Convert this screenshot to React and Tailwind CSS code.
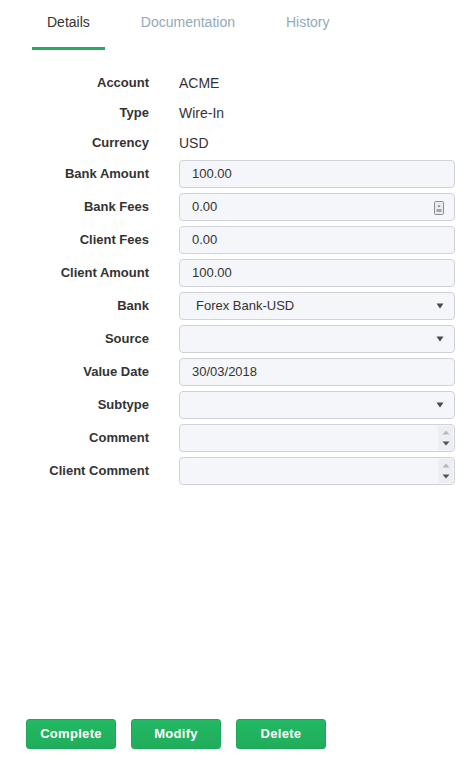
import React from 'react';

const font = { fontFamily: '"Liberation Sans", Arial, sans-serif' };

const Caret = () => (
  <svg width="8" height="6" viewBox="0 0 8 6" className="shrink-0">
    <path d="M0.5 0.5 L7.5 0.5 L4 5.5 Z" fill="#4a4a4a" />
  </svg>
);

const CalcIcon = () => (
  <svg width="10" height="14" viewBox="0 0 10 14" className="shrink-0">
    <rect x="0.5" y="0.5" width="9" height="13" rx="1" fill="#e9ebee" stroke="#8a8d90" />
    <path d="M5 3.5 L6.5 6 L3.5 6 Z" fill="#8a8d90" />
    <rect x="2.5" y="8" width="5" height="3" fill="#a4a7aa" />
  </svg>
);

const Spinner = () => (
  <div className="flex h-full w-[15px] flex-col items-center justify-center gap-[6px] bg-[#eceef1]">
    <svg width="8" height="5" viewBox="0 0 8 5">
      <path d="M0.5 4.5 L7.5 4.5 L4 0.5 Z" fill="#b5b7ba" />
    </svg>
    <svg width="8" height="5" viewBox="0 0 8 5">
      <path d="M0.5 0.5 L7.5 0.5 L4 4.5 Z" fill="#505255" />
    </svg>
  </div>
);

const TextRow = ({ label, value }) => (
  <div className="flex h-[30px] items-center">
    <div className="w-[150px] pr-px text-right text-[13px] font-bold text-[#333]">{label}</div>
    <div className="ml-[29px] text-[14px] text-[#333]">{value}</div>
  </div>
);

const InputRow = ({ label, value, kind }) => (
  <div className="flex h-[28px] items-center">
    <div className="w-[150px] pr-px text-right text-[13px] font-bold text-[#333]">{label}</div>
    <div className="ml-[29px] flex h-[28px] w-[276px] items-center rounded-[4px] border border-[#cfd3d8] bg-[#f4f6fa] text-[13px] text-[#333]">
      <span className={kind === 'select' ? 'flex-1 pl-[16px]' : 'flex-1 pl-[12px]'}>{value}</span>
      {kind === 'select' && (
        <span className="pr-[10px]">
          <Caret />
        </span>
      )}
      {kind === 'calc' && (
        <span className="pr-[10px] pt-px">
          <CalcIcon />
        </span>
      )}
      {kind === 'text' && (
        <span className="h-full py-px pr-px">
          <Spinner />
        </span>
      )}
    </div>
  </div>
);

const Button = ({ children }) => (
  <button className="h-[30px] w-[90px] rounded-[3px] border border-[#1fa758] bg-gradient-to-b from-[#23b964] to-[#20ad5c] text-[13px] font-bold tracking-[0.3px] text-white">
    {children}
  </button>
);

export default function App() {
  return (
    <div className="flex h-screen w-full flex-col bg-white" style={font}>
      <div className="flex pl-[32px]">
        <div className="flex h-[50px] flex-col items-center">
          <div className="flex flex-1 items-center px-[15px] pb-[2px] text-[14px] text-[#333]">Details</div>
          <div className="h-[3px] w-full bg-[#25ab62]" />
        </div>
        <div className="ml-[21px] flex h-[50px] items-center px-[15px] pb-[5px] text-[14px] text-[#93a9b8]">Documentation</div>
        <div className="ml-[21px] flex h-[50px] items-center px-[15px] pb-[5px] text-[14px] text-[#93a9b8]">History</div>
      </div>

      <div className="mt-[18px] flex flex-col">
        <TextRow label="Account" value="ACME" />
        <TextRow label="Type" value="Wire-In" />
        <TextRow label="Currency" value="USD" />
      </div>

      <div className="mt-[2px] flex flex-col gap-[5px]">
        <InputRow label="Bank Amount" value="100.00" />
        <InputRow label="Bank Fees" value="0.00" kind="calc" />
        <InputRow label="Client Fees" value="0.00" />
        <InputRow label="Client Amount" value="100.00" />
        <InputRow label="Bank" value="Forex Bank-USD" kind="select" />
        <InputRow label="Source" value="" kind="select" />
        <InputRow label="Value Date" value="30/03/2018" />
        <InputRow label="Subtype" value="" kind="select" />
        <InputRow label="Comment" value="" kind="text" />
        <InputRow label="Client Comment" value="" kind="text" />
      </div>

      <div className="mt-auto flex gap-[15px] pb-[11px] pl-[26px]">
        <Button>Complete</Button>
        <Button>Modify</Button>
        <Button>Delete</Button>
      </div>
    </div>
  );
}
